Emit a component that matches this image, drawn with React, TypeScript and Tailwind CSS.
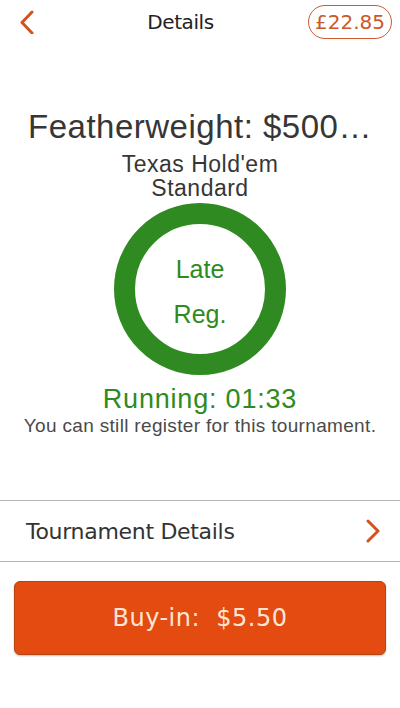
import React from "react";

export default function App() {
  return (
    <div className="w-[400px] h-[708px] bg-white flex flex-col overflow-hidden">
      {/* Header */}
      <div className="h-[44px] flex items-center pl-[19px] pr-[8px]">
        <svg width="16" height="24" viewBox="0 0 16 24" className="shrink-0">
          <polyline points="13,2 3,12.5 13,23" fill="none" stroke="#d4521f" strokeWidth="3" strokeLinecap="round" strokeLinejoin="round" />
        </svg>
        <div className="flex-1 text-center pl-[18px] text-[20px] tracking-[-0.4px] text-[#222] font-['DejaVu_Sans',Verdana,sans-serif]">
          Details
        </div>
        <div className="h-[34px] px-[6px] rounded-full border-[1.5px] border-[#cc5a2c] flex items-center text-[20px] text-[#c9582a] font-['DejaVu_Sans',Verdana,sans-serif]">
          £22.85
        </div>
      </div>

      {/* Title */}
      <div className="mt-[64px] text-center text-[33px] leading-[37px] tracking-[0.5px] text-[#363636] whitespace-nowrap font-['Liberation_Sans',Arial,sans-serif]">
        Featherweight: $500…
      </div>
      <div className="mt-[7px] text-center text-[23px] leading-[24px] tracking-[0.5px] text-[#363636] font-['Liberation_Sans',Arial,sans-serif]">
        <div>Texas Hold'em</div>
        <div>Standard</div>
      </div>

      {/* Circle */}
      <div className="mt-[3px] flex justify-center">
        <div className="w-[172px] h-[172px] rounded-full border-[21px] border-[#2f8a21] flex flex-col items-center justify-center pt-[5px] text-[25px] leading-[45px] text-[#2f8a21] font-['Liberation_Sans',Arial,sans-serif]">
          <div>Late</div>
          <div>Reg.</div>
        </div>
      </div>

      <div className="mt-[9px] text-center text-[27px] leading-[30px] tracking-[0.8px] text-[#2f8a21] font-['Liberation_Sans',Arial,sans-serif]">
        Running: 01:33
      </div>
      <div className="mt-[1px] text-center text-[19px] leading-[22px] tracking-[0.33px] text-[#4a4a4a] whitespace-nowrap font-['Liberation_Sans',Arial,sans-serif]">
        You can still register for this tournament.
      </div>

      {/* Tournament details row */}
      <div className="mt-[63px] border-t border-b border-[#b4b4b4] h-[62px] flex items-center justify-between pl-[26px] pr-[19px]">
        <div className="text-[22px] tracking-[-0.3px] text-[#333] font-['DejaVu_Sans',Verdana,sans-serif]">
          Tournament Details
        </div>
        <svg width="16" height="24" viewBox="0 0 16 24">
          <polyline points="3,2 13,12 3,22" fill="none" stroke="#d4521f" strokeWidth="3" strokeLinecap="round" strokeLinejoin="round" />
        </svg>
      </div>

      {/* Buy-in button */}
      <div className="mt-[19px] mx-[14px] h-[74px] rounded-[6px] bg-[#e34b10] border border-[#b9430f] shadow-[0_1px_2px_rgba(0,0,0,0.25)] flex items-center justify-center">
        <span className="text-[24px] tracking-[0.5px] text-[#fbe6d6] whitespace-pre font-['DejaVu_Sans',Verdana,sans-serif]">
          {"Buy-in:  $5.50"}
        </span>
      </div>
    </div>
  );
}
